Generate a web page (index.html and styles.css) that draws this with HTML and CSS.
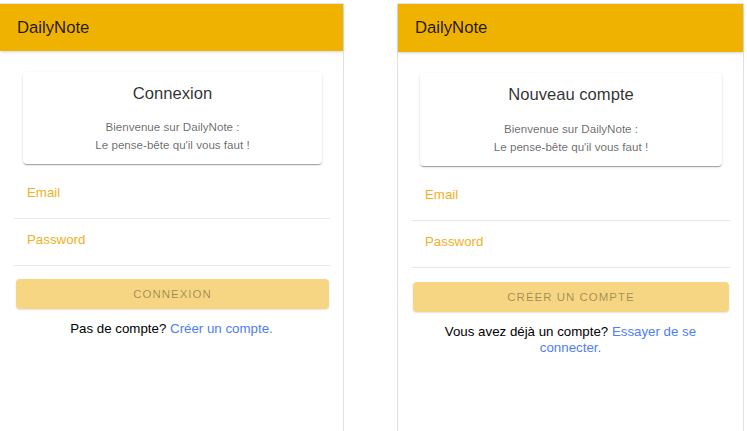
FILE: index.html
```html
<!DOCTYPE html>
<html lang="fr">
<head>
<meta charset="utf-8">
<title>DailyNote</title>
<link rel="stylesheet" href="styles.css">
</head>
<body>
  <section class="panel panel--login">
    <header class="toolbar">DailyNote</header>
    <div class="card">
      <h1 class="card-title">Connexion</h1>
      <p class="card-sub">Bienvenue sur DailyNote :<br>Le pense-bête qu'il vous faut !</p>
    </div>
    <div class="field"><span class="field-label">Email</span></div>
    <div class="field"><span class="field-label">Password</span></div>
    <button class="btn" type="button" disabled>Connexion</button>
    <p class="alt">Pas de compte? <a class="link" href="#">Créer un compte.</a></p>
  </section>

  <section class="panel panel--signup">
    <header class="toolbar">DailyNote</header>
    <div class="card">
      <h1 class="card-title">Nouveau compte</h1>
      <p class="card-sub">Bienvenue sur DailyNote :<br>Le pense-bête qu'il vous faut !</p>
    </div>
    <div class="field"><span class="field-label">Email</span></div>
    <div class="field"><span class="field-label">Password</span></div>
    <button class="btn" type="button" disabled>Créer un compte</button>
    <p class="alt">Vous avez déjà un compte? <a class="link" href="#">Essayer de se connecter.</a></p>
  </section>
</body>
</html>
```

FILE: styles.css
```css
* { box-sizing: border-box; }

html, body {
  margin: 0;
  padding: 0;
  background: #ffffff;
}

body {
  display: flex;
  align-items: flex-start;
  gap: 53px;
  height: 431px;
  overflow: hidden;
  font-family: "Liberation Sans", Arial, sans-serif;
  color: rgba(0, 0, 0, 0.87);
}

.panel {
  display: flex;
  flex-direction: column;
  margin-top: 3px;
  height: 428px;
  border-top: 1px solid #ececec;
  border-right: 1px solid #e2e2e2;
  background: #fff;
}

.panel--login {
  width: 344px;
}

.panel--signup {
  width: 347px;
  border-left: 1px solid #e2e2e2;
}

.toolbar {
  height: 47px;
  flex: none;
  display: flex;
  align-items: center;
  padding-left: 17px;
  background: #f0b200;
  color: rgba(0, 0, 0, 0.87);
  font-size: 16.7px;
  box-shadow: 0 1px 3px rgba(0, 0, 0, 0.18);
  position: relative;
  z-index: 1;
}

.panel--signup .toolbar { height: 48px; }

.card {
  margin: 21px 21px 0 23px;
  padding: 12px 10px 10px;
  border-radius: 4px;
  background: #fff;
  text-align: center;
  box-shadow: 0 2px 1px -1px rgba(0, 0, 0, 0.2),
              0 1px 1px 0 rgba(0, 0, 0, 0.14),
              0 1px 3px 0 rgba(0, 0, 0, 0.12);
}

.panel--signup .card { margin: 21px 21px 0 22px; }

.card-title {
  margin: 0;
  font-size: 16.6px;
  font-weight: 400;
  line-height: 20px;
  color: rgba(0, 0, 0, 0.82);
}

.card-sub {
  margin: 14px 0 0;
  font-size: 11.6px;
  line-height: 18px;
  color: rgba(0, 0, 0, 0.6);
}

.panel--signup .card-sub { margin-top: 15px; }

.field {
  margin: 0 13px 0 14px;
  padding: 13px 13px 17px;
  border-bottom: 1px solid #e8e8e8;
}

.field:first-of-type { margin-top: 8px; }

.card + .field { margin-top: 8px; }

.field-label {
  display: block;
  font-size: 13.3px;
  line-height: 16px;
  color: #f2b01e;
}

.btn {
  flex: none;
  height: 30px;
  margin: 13px 14px 0 16px;
  border: 0;
  border-radius: 4px;
  background: #f7d683;
  font-family: "Liberation Sans", Arial, sans-serif;
  font-size: 11.5px;
  letter-spacing: 1px;
  text-transform: uppercase;
  color: rgba(0, 0, 0, 0.36);
  box-shadow: 0 1px 2px rgba(0, 0, 0, 0.12);
}

.panel--signup .btn { margin: 14px 14px 0 15px; }

.alt {
  margin: 12px 0 0;
  padding: 0 16px;
  text-align: center;
  font-size: 13.3px;
  line-height: 16px;
  color: #000;
}

.link {
  color: #4e7ef4;
  text-decoration: none;
}
```
